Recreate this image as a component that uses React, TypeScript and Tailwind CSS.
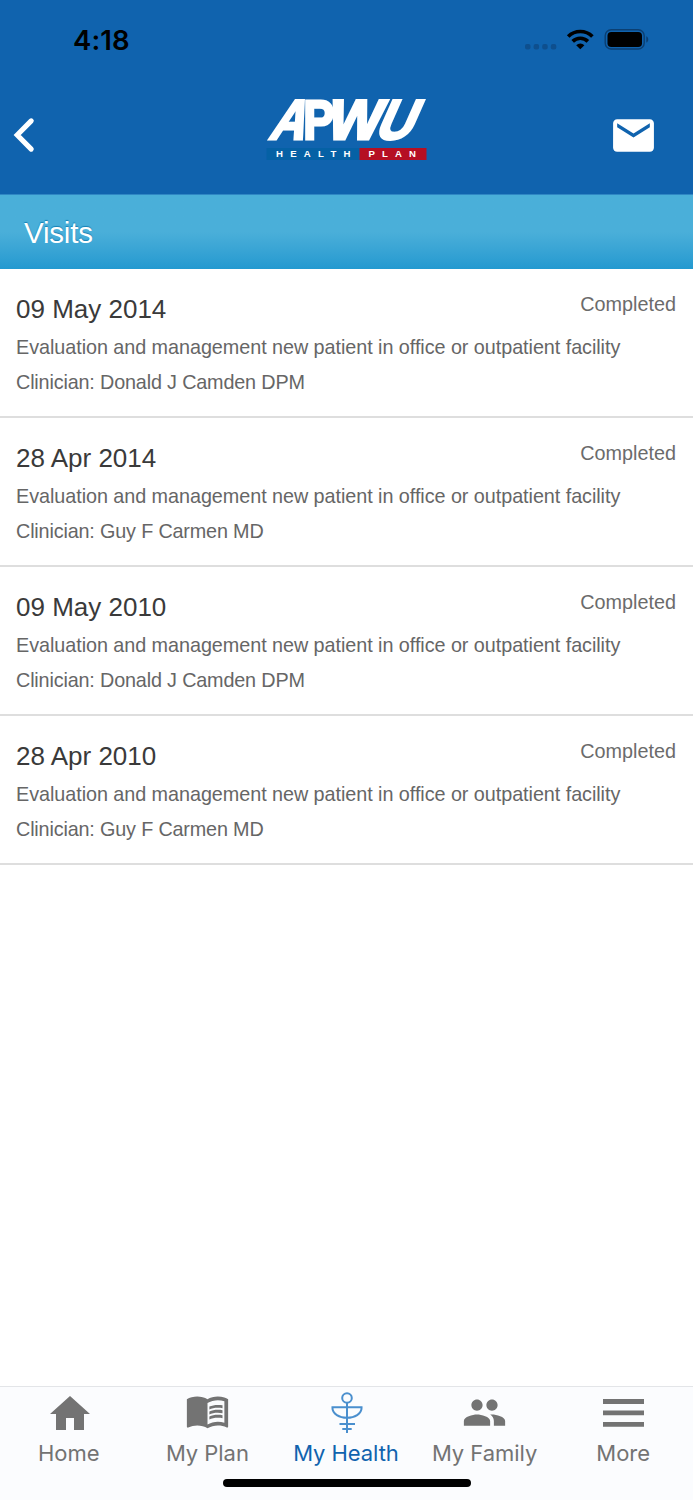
import React, { ReactNode } from 'react';
import { MdMail, MdMenuBook, MdPeople } from 'react-icons/md';

interface Visit {
  date: string;
  status: string;
  description: string;
  clinician: string;
}

const description = 'Evaluation and management new patient in office or outpatient facility';

const visits: Visit[] = [
  { date: '09 May 2014', status: 'Completed', description, clinician: 'Donald J Camden DPM' },
  { date: '28 Apr 2014', status: 'Completed', description, clinician: 'Guy F Carmen MD' },
  { date: '09 May 2010', status: 'Completed', description, clinician: 'Donald J Camden DPM' },
  { date: '28 Apr 2010', status: 'Completed', description, clinician: 'Guy F Carmen MD' },
];

function StatusBar() {
  return (
    <div className="flex h-[78px] items-center justify-between pl-[73px] pr-[44px] text-black">
      <span className="pt-[3px] font-['Inter',sans-serif] text-[27.5px] font-semibold leading-none tracking-[0.1px]">4:18</span>
      <div className="flex items-center">
        <svg width="124" height="26" viewBox="0 0 124 26">
          <g fill="#0e4f8e">
            <rect x="0" y="18" width="5.5" height="5.5" rx="2" />
            <rect x="8.6" y="18" width="5.5" height="5.5" rx="2" />
            <rect x="17.2" y="18" width="5.5" height="5.5" rx="2" />
            <rect x="25.8" y="18" width="5.5" height="5.5" rx="2" />
          </g>
          <g fill="none" stroke="#000" strokeWidth="3.7">
            <path d="M43.2 10.5a17.2 17.2 0 0 1 24.2 0" />
            <path d="M47.7 15.3a11 11 0 0 1 15.2 0" />
          </g>
          <path d="M55.3 23.3l-4.1-4.1a6 6 0 0 1 8.2 0z" />
          <rect x="80.2" y="3.8" width="39" height="19.2" rx="6" fill="none" stroke="#0b3f72" strokeWidth="1.4" />
          <rect x="82.5" y="6" width="34.5" height="15" rx="3.8" />
          <path d="M121.3 10.2c2.6 1 2.6 5.4 0 6.4z" fill="#0b3f72" />
        </svg>
      </div>
    </div>
  );
}

function Logo() {
  return (
    <svg width="160" height="63" viewBox="0 0 160 63" className="overflow-visible font-['Liberation_Sans',sans-serif] font-bold">
      <g fill="#fff" stroke="#fff" strokeWidth="2.8" fontSize="56">
        <text transform="translate(1 41) skewX(-20)" textLength="35" lengthAdjust="spacingAndGlyphs">A</text>
        <text transform="translate(36.2 41)" textLength="31" lengthAdjust="spacingAndGlyphs">P</text>
        <text transform="translate(57.5 41) skewX(-14)" textLength="54" lengthAdjust="spacingAndGlyphs">W</text>
        <text transform="translate(106 41) skewX(-24)" textLength="37" lengthAdjust="spacingAndGlyphs">U</text>
      </g>
      <rect x="-0.5" y="50" width="93" height="12" fill="#0561a5" />
      <rect x="92.5" y="50" width="67" height="12" fill="#b50f23" />
      <g fill="#fff" fontSize="9.6">
        <text x="9" y="59.4" textLength="74.5">HEALTH</text>
        <text x="101.5" y="59.4" textLength="47.5">PLAN</text>
      </g>
    </svg>
  );
}

function Header() {
  return (
    <header className="h-[194px] bg-[#1063ae]">
      <StatusBar />
      <div className="grid grid-cols-3 items-start px-3">
        <button className="mt-[39px] justify-self-start">
          <svg width="24" height="36" viewBox="0 0 24 36" fill="none" stroke="#fff" strokeWidth="5.1" strokeLinecap="round" strokeLinejoin="miter">
            <path d="M19.2 3.9L5.2 18l14 14.1" />
          </svg>
        </button>
        <div className="mt-5 justify-self-center">
          <Logo />
        </div>
        <button className="mr-[23px] mt-[33px] justify-self-end text-white">
          <MdMail size={49} />
        </button>
      </div>
    </header>
  );
}

function VisitRow({ visit }: { visit: Visit }) {
  return (
    <li className="h-[149px] border-b-2 border-[#dedede] pl-4 pr-[17px] pt-5">
      <div className="flex justify-between">
        <h2 className="text-[26px] leading-10 text-[#3a3a3a]">{visit.date}</h2>
        <span className="text-[19.8px] leading-[31px] text-[#6b6b6b]">{visit.status}</span>
      </div>
      <p className="text-[19.8px] leading-9 tracking-[-0.05px] text-[#666]">{visit.description}</p>
      <p className="text-[19.8px] leading-[34px] tracking-[-0.16px] text-[#666]">Clinician: {visit.clinician}</p>
    </li>
  );
}

function HealthIcon() {
  return (
    <svg width="34" height="44" viewBox="0 0 34 44" fill="none" stroke="#4a8fce" strokeWidth="2" className="ml-px">
      <circle cx="17" cy="7" r="4.8" />
      <path d="M17 12v30M1.5 16.2h31M2.4 16.5c0 6.5 7 10.2 14.6 10.2s14.6-3.7 14.6-10.2M9.5 33h15.5M12.3 38h9.4" />
    </svg>
  );
}

interface TabProps {
  label: string;
  icon: ReactNode;
  active?: boolean;
}

function Tab({ label, icon, active }: TabProps) {
  return (
    <button className={`flex flex-1 flex-col items-center ${active ? 'text-[#1063ae]' : 'text-[#737373]'}`}>
      <span className="flex h-[52px] items-center justify-center">{icon}</span>
      <span className="whitespace-nowrap pr-px text-[22px] leading-[28px] tracking-[-0.05px]">{label}</span>
    </button>
  );
}

function TabBar() {
  return (
    <nav className="h-[114px] border-t border-[#e3e5e8] bg-[#fbfcfe] font-['Inter',sans-serif]">
      <div className="flex">
        <Tab
          label="Home"
          icon={
            <svg width="48" height="48" viewBox="0 0 24 24" fill="currentColor" className="ml-px mt-0.5">
              <path d="M10 20v-6h4v6h5v-8h3L12 3 2 12h3v8z" />
            </svg>
          }
        />
        <Tab label="My Plan" icon={<MdMenuBook size={45} className="mb-[5px]" />} />
        <Tab label="My Health" icon={<HealthIcon />} active />
        <Tab label="My Family" icon={<MdPeople size={45} className="mb-px mr-px" />} />
        <Tab
          label="More"
          icon={
            <svg width="41" height="28" viewBox="0 0 41 28" fill="currentColor">
              <path d="M0 0h41v5H0zM0 11.5h41v4.7H0zM0 23h41v4.8H0z" />
            </svg>
          }
        />
      </div>
      <div className="mx-auto mt-3 h-2 w-[248px] rounded-full bg-black" />
    </nav>
  );
}

export default function App() {
  return (
    <div className="flex h-[1500px] w-full flex-col bg-white font-['Liberation_Sans',Arial,sans-serif]">
      <Header />
      <h1 className="h-[75px] border-t border-[#2f87c4] bg-linear-to-b from-[#4aafd9] from-50% to-[#2299d0] pl-6 text-[29.5px] leading-[75px] tracking-[-0.2px] text-white [text-shadow:0_-1px_1px_#1580b5]">
        Visits
      </h1>
      <ul className="flex-1">
        {visits.map((visit) => (
          <VisitRow key={visit.date} visit={visit} />
        ))}
      </ul>
      <TabBar />
    </div>
  );
}
